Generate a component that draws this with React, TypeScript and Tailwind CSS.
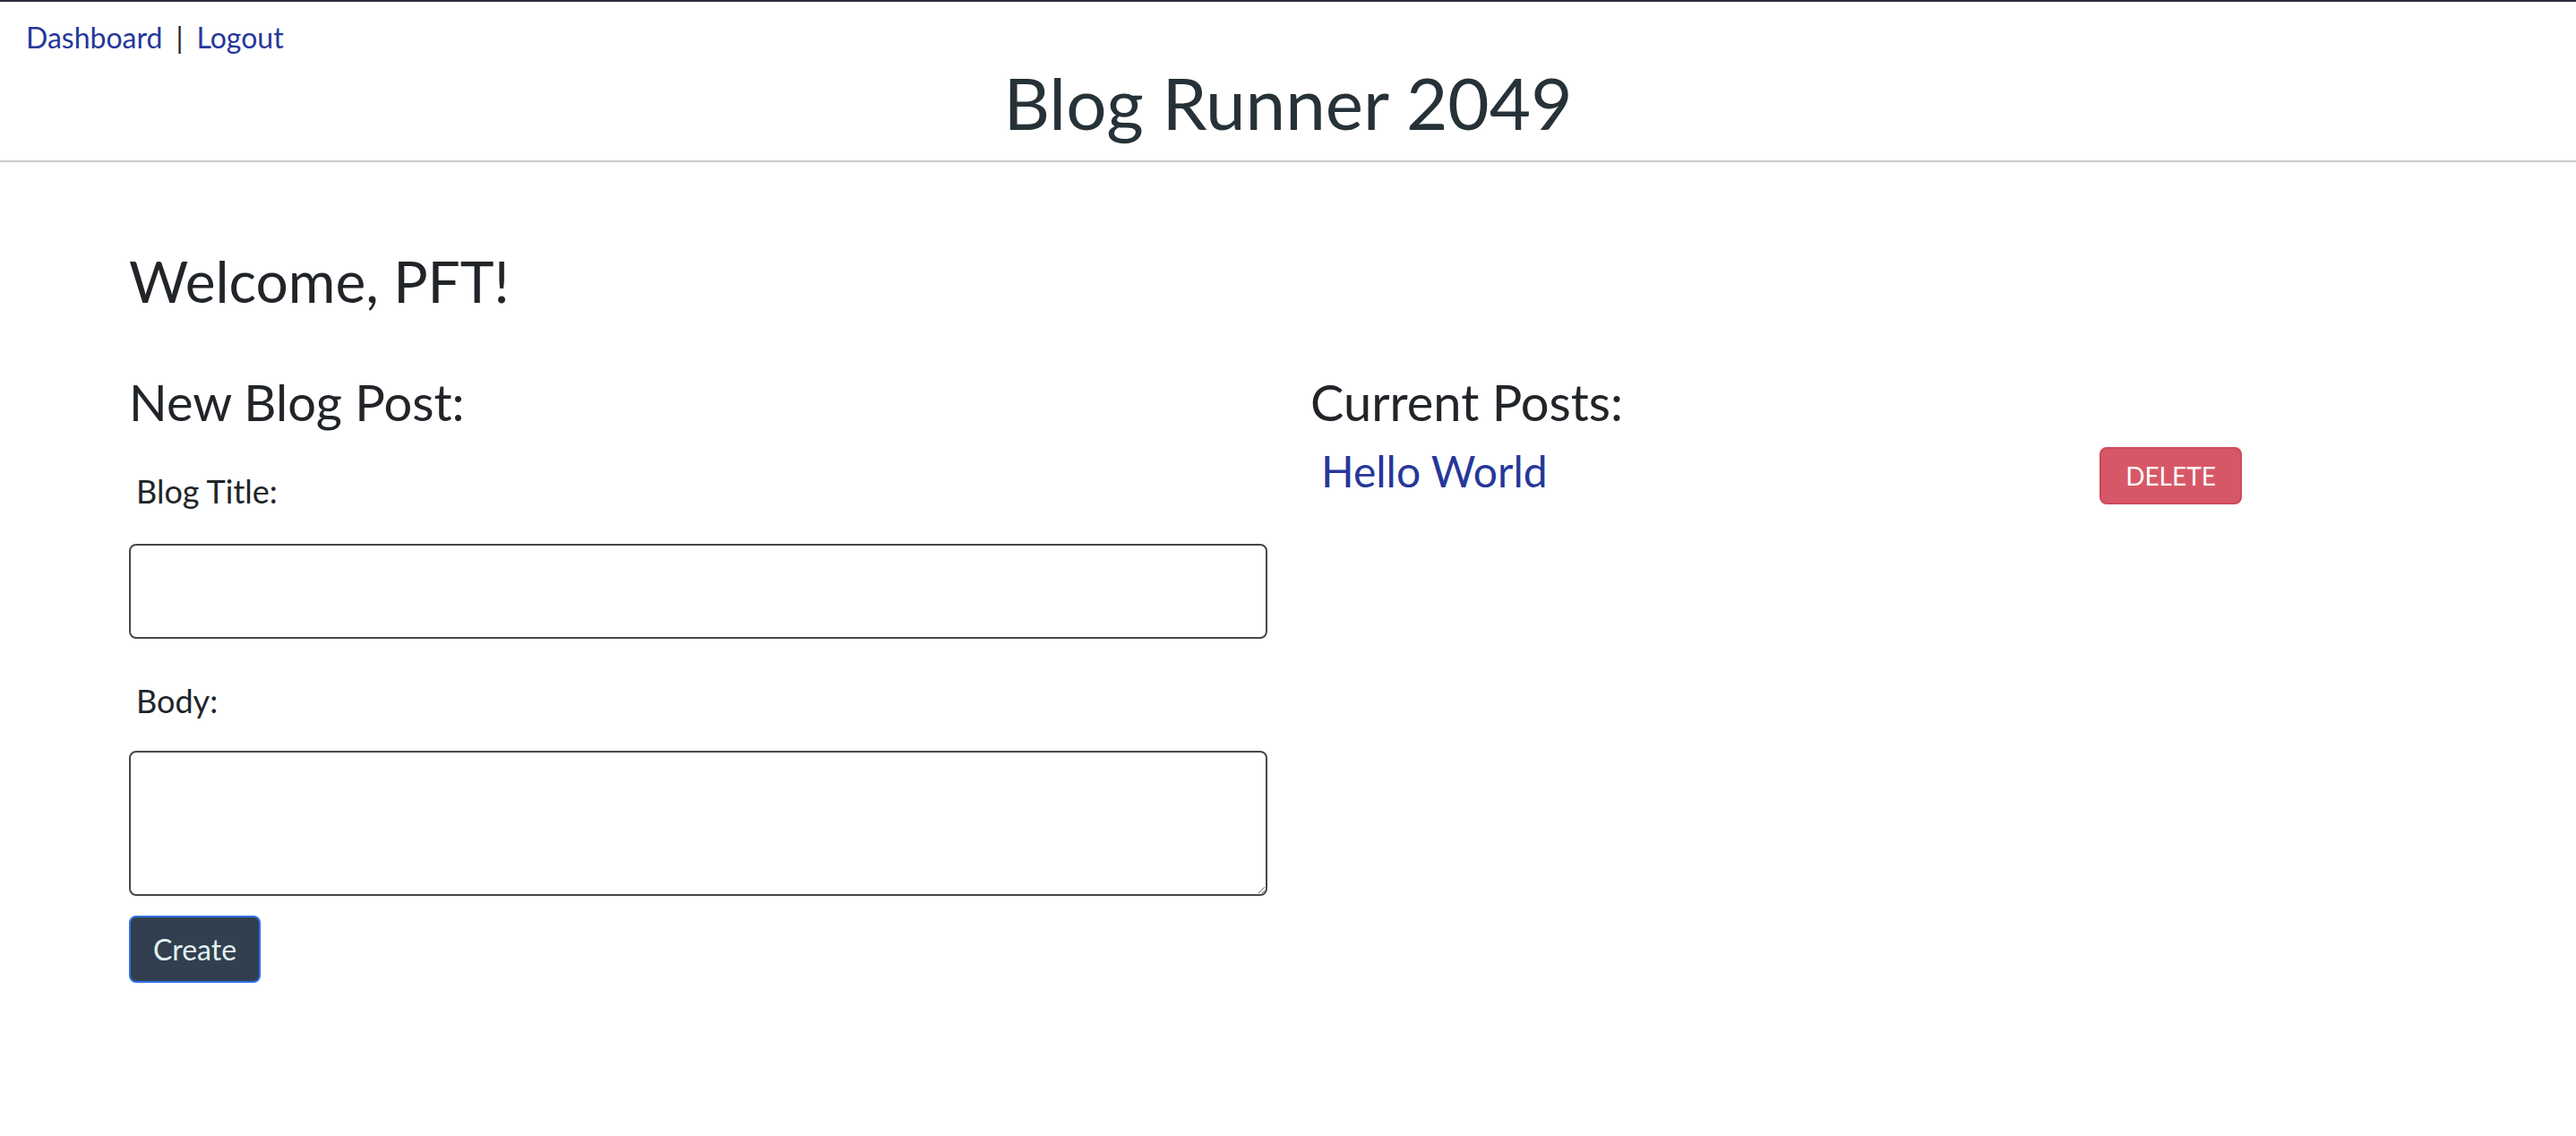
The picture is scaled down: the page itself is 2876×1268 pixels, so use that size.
import React from "react";

interface Post {
  id: number;
  title: string;
}

const posts: Post[] = [{ id: 1, title: "Hello World" }];

const Header: React.FC = () => {
  return (
    <header className="border-t-2 border-t-[#2b2e3b] border-b-2 border-b-[#cccccc] pb-[17px]">
      <nav className="pt-[16px] pl-[29px] text-[32px] leading-[48px] flex items-center">
        <a href="#" className="text-[#26379a]">
          Dashboard
        </a>
        <span className="mx-[15px] text-[#212529]">|</span>
        <a href="#" className="text-[#26379a]">
          Logout
        </a>
      </nav>
      <h1 className="text-center text-[80px] leading-[96px] text-[#263238]">
        Blog Runner 2049
      </h1>
    </header>
  );
};

const NewPostForm: React.FC = () => {
  return (
    <div className="w-[1271px] flex flex-col">
      <h3 className="text-[56px] leading-[67px] text-[#212529]">New Blog Post:</h3>
      <label className="mt-[39px] pl-[8px] text-[36px] leading-[54px] text-[#212529]">
        Blog Title:
      </label>
      <input
        type="text"
        className="mt-[32px] h-[106px] w-full border-2 border-[#474747] rounded-[8px] px-4 text-[32px] outline-none"
      />
      <label className="mt-[42px] pl-[8px] text-[36px] leading-[54px] text-[#212529]">
        Body:
      </label>
      <textarea className="mt-[29px] h-[162px] w-full border-2 border-[#474747] rounded-[8px] px-4 py-2 text-[32px] outline-none" />
      <div className="mt-[22px]">
        <button className="w-[147px] h-[75px] bg-[#323f4f] border-2 border-[#2f6fe4] rounded-[8px] text-[32px] text-[#e0f2f1]">
          Create
        </button>
      </div>
    </div>
  );
};

const CurrentPosts: React.FC = () => {
  return (
    <div className="flex flex-col">
      <h3 className="text-[56px] leading-[67px] text-[#212529]">Current Posts:</h3>
      {posts.map((post) => (
        <div key={post.id} className="mt-[15px] w-[1040px] flex justify-between items-start">
          <a href="#" className="pl-[12px] text-[48px] leading-[58px] text-[#26379a]">
            {post.title}
          </a>
          <button className="mt-[2px] w-[159px] h-[64px] bg-[#d65868] border-2 border-[#cd4a5a] rounded-[8px] text-[28px] text-white">
            DELETE
          </button>
        </div>
      ))}
    </div>
  );
};

export default function App() {
  return (
    <div className="min-h-screen bg-white font-['Lato',sans-serif]">
      <Header />
      <main className="pl-[144px] pt-[94px]">
        <h2 className="text-[64px] leading-[77px] text-[#212529]">Welcome, PFT!</h2>
        <div className="mt-[63px] flex gap-[48px]">
          <NewPostForm />
          <CurrentPosts />
        </div>
      </main>
    </div>
  );
}
